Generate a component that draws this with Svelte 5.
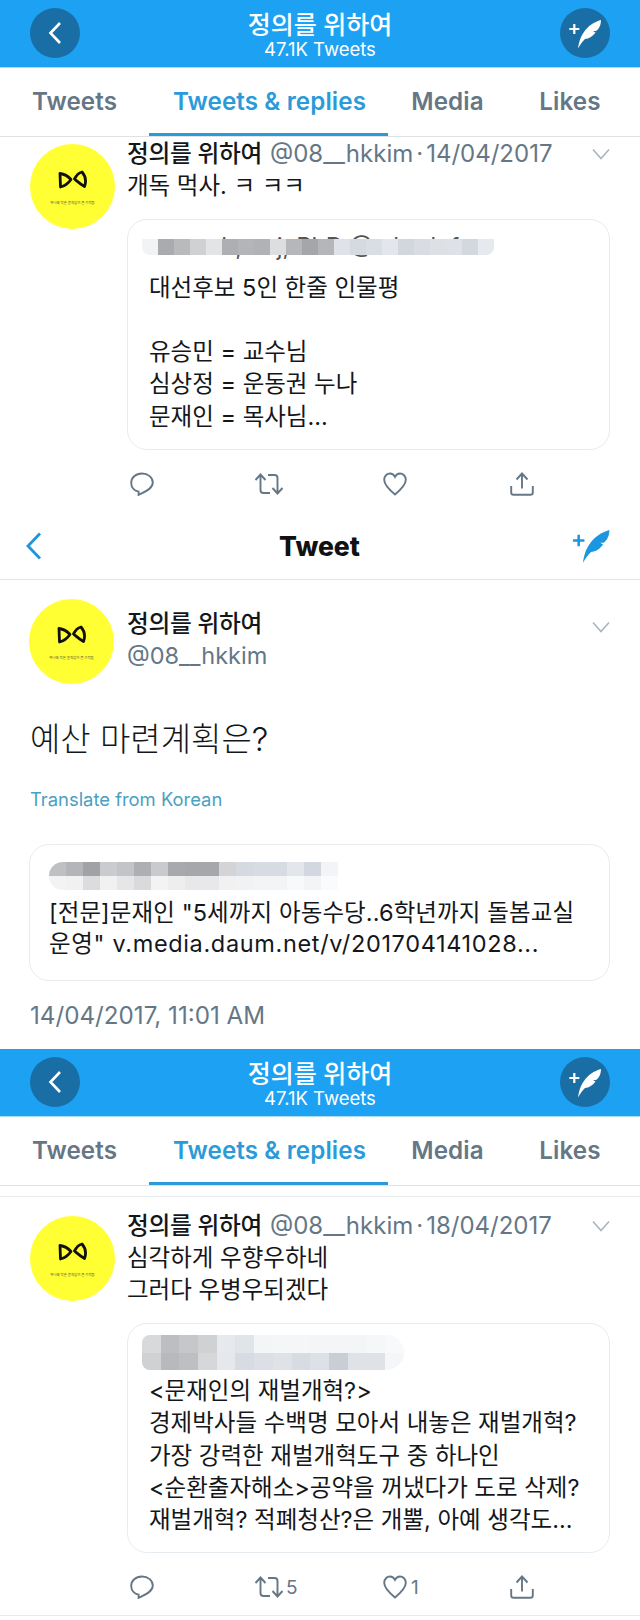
<script lang="ts">
  const tabs = ['Tweets', 'Tweets & replies', 'Media', 'Likes'];

  const g = (s: string) => s.split(' ').map((c) => '#' + c);

  const strip1 = [g('f2f3f4 a9abae b8babc cfd1d3 e3e4e6 adafb2 b3b5b8 b0b2b5 dcdedf b5b7ba a4a6aa b4b6b9 dfe3e8 d5dae1 d9dee4 e3e7eb d2d7de d9dde3 dde1e6 dee2e7 d2d8de e6e9ed')];
  const strip2 = [
    g('bfc0c3 b3b5b8 a0a2a6 c9cbce c2c4c7 adafb3 c8cacd a7a9ad a5a7ab a5a7ab d3d4d6 d5dae1 d7dce3 d7dce3 e3e7ec d2d7e0 f3f4f7'),
    g('f3f3f4 f1f1f2 dcdcde f1f1f2 e6e6e8 dadadc f3f3f4 eeeeef e8e8ea e8e8ea f1f1f2 f1f2f4 f3f4f6 f3f4f6 f8f9fa f3f4f6 fafbfc')
  ];
  const strip3 = [
    g('d8d9da bdbec1 c6c7c9 d0d1d3 e6eaee e0e5ea f3f5f7 f5f6f8 f5f6f8 f3f5f7 f3f5f7 f3f5f7 f6f7f9 f8f9fb'),
    g('d0d1d3 b7b9bc bdbfc2 d6d7d9 e6e8eb d7dce3 dce0e6 dfe3e8 d7dce3 dde1e7 c9ced6 dfe3e8 dfe3e8 f5f6f8')
  ];
</script>

{#snippet mosaic(rows, w, h)}
  <div class="mosaic">
    {#each rows as row}
      <div class="mosaic-row">
        {#each row as c}
          <span style="width:{w}px;height:{h}px;background:{c}"></span>
        {/each}
      </div>
    {/each}
  </div>
{/snippet}

{#snippet avatar()}
  <div class="avatar">
    <svg class="bow" width="32" height="21" viewBox="0 0 32 21">
      <path d="M3 3.5 L3.5 17 C8 16 11.5 13 14 9.5 C11 6 7 4 3 3.5 Z" />
      <path d="M25 2 C21 3 19 6 17.5 9 C20 11 23 14 27.5 16.5 C29.5 11 28.5 6 25 2 Z" />
    </svg>
    <span class="motto">하나의 작은 움직임이 큰 기적을</span>
  </div>
{/snippet}

{#snippet quill(color)}
  <svg width="50" height="50" viewBox="0 0 50 50">
    <path d="M9.3 21h10M14.3 16v10" stroke={color} stroke-width="2.2" fill="none" />
    <path
      d="M18 40.5 C19 33 21 28 24 24 C28 18 34 14 41 12 C41 17 39 21 36 23 L33 23 L35.5 24.5 C33 28 29 31 25 31 C22 34 20 37 18 40.5 Z"
      fill={color}
    />
  </svg>
{/snippet}

{#snippet profileBar()}
  <header class="bar">
    <div class="round">
      <svg width="16" height="28" viewBox="0 0 16 28">
        <path d="M13 4 L3.5 14 L13 24" fill="none" stroke="#fff" stroke-width="2.6" />
      </svg>
    </div>
    <div class="bar-title">
      <div class="bar-name">정의를 위하여</div>
      <div class="bar-count">47.1K Tweets</div>
    </div>
    <div class="round">{@render quill('#fff')}</div>
  </header>
  <nav class="tabs">
    {#each tabs as tab, i}
      <div class="tab" class:active={i === 1}>{tab}</div>
    {/each}
  </nav>
{/snippet}

{#snippet chevron()}
  <svg class="chevron" width="18" height="12" viewBox="0 0 18 12">
    <path d="M1 1.5 L9 10.5 L17 1.5" fill="none" stroke="#a9b5bf" stroke-width="1.6" />
  </svg>
{/snippet}

{#snippet actions(retweets, likes)}
  <div class="actions">
    <div class="action">
      <svg width="24" height="24" viewBox="0 0 24 24" class="ico">
        <path d="M12 1.5 C5.5 1.5 1.2 5.8 1.2 11 C1.2 15.8 4.8 18.8 8.6 19.6 L8.6 23 C13.5 20.5 22.8 17 22.8 10.5 C22.8 5.5 18 1.5 12 1.5 Z" />
      </svg>
    </div>
    <div class="action">
      <svg width="30" height="24" viewBox="0 0 30 24" class="ico">
        <path d="M1.5 8 L6.5 2.5 L11.5 8 M6.5 3 L6.5 18 C6.5 20 7.5 21 9.5 21 L16 21" />
        <path d="M14 3 L20.5 3 C22.5 3 23.5 4 23.5 6 L23.5 21 M18.5 16 L23.5 21.5 L28.5 16" />
      </svg>
      {#if retweets}<span class="num">{retweets}</span>{/if}
    </div>
    <div class="action">
      <svg width="24" height="24" viewBox="0 0 24 24" class="ico">
        <path d="M12 22.5 C6 17.5 1.2 13 1.2 7.8 C1.2 4 4 1.5 7 1.5 C9.2 1.5 11 2.8 12 4.8 C13 2.8 14.8 1.5 17 1.5 C20 1.5 22.8 4 22.8 7.8 C22.8 13 18 17.5 12 22.5 Z" />
      </svg>
      {#if likes}<span class="num like">{likes}</span>{/if}
    </div>
    <div class="action">
      <svg width="24" height="24" viewBox="0 0 24 24" class="ico">
        <path d="M6.5 7.5 L12 1.5 L17.5 7.5 M12 2 L12 16.5 M1.2 14 L1.2 20.5 C1.2 22 2 22.8 3.5 22.8 L20.5 22.8 C22 22.8 22.8 22 22.8 20.5 L22.8 14" />
      </svg>
    </div>
  </div>
{/snippet}

<div class="page">
  {@render profileBar()}

  <section class="tweet first">
    {@render avatar()}
    <div class="main">
      <div class="meta">
        <span class="name">정의를 위하여</span>
        <span class="handle">@08__hkkim</span>
        <span class="dot">·</span>
        <span class="handle">14/04/2017</span>
        {@render chevron()}
      </div>
      <p class="text">개독 먹사. ㅋ ㅋㅋ</p>
      <div class="card card-a">
        <div class="byline">
          <div class="byline-text">ooo oth, anj, PhD @ abcdef</div>
          <div class="cover">{@render mosaic(strip1, 16, 16)}</div>
        </div>
        <p class="quoted">대선후보 5인 한줄 인물평<br /><br />유승민 = 교수님<br />심상정 = 운동권 누나<br />문재인 = 목사님...</p>
      </div>
      {@render actions(null, null)}
    </div>
  </section>

  <nav class="tweet-nav">
    <svg width="22" height="30" viewBox="0 0 22 30">
      <path d="M17 2.5 L5 15 L17 27.5" fill="none" stroke="#1d96e0" stroke-width="2.8" />
    </svg>
    <div class="tweet-nav-title">Tweet</div>
    <div class="nav-quill">{@render quill('#1d96e0')}</div>
  </nav>

  <section class="detail">
    <div class="detail-head">
      {@render avatar()}
      <div class="detail-who">
        <div class="name">정의를 위하여</div>
        <div class="handle big">@08__hkkim</div>
      </div>
      {@render chevron()}
    </div>
    <p class="detail-text">예산 마련계획은?</p>
    <div class="translate">Translate from Korean</div>
    <div class="card card-b">
      {@render mosaic(strip2, 17, 14)}
      <p class="quoted">[전문]문재인 "5세까지 아동수당..6학년까지 돌봄교실<br /><span class="wide">운영" v.media.daum.net/v/201704141028...</span></p>
    </div>
    <div class="stamp">14/04/2017, 11:01 AM</div>
  </section>

  {@render profileBar()}

  <section class="tweet last">
    {@render avatar()}
    <div class="main">
      <div class="meta">
        <span class="name">정의를 위하여</span>
        <span class="handle">@08__hkkim</span>
        <span class="dot">·</span>
        <span class="handle">18/04/2017</span>
        {@render chevron()}
      </div>
      <p class="text">심각하게 우향우하네<br />그러다 우병우되겠다</p>
      <div class="card card-c">
        {@render mosaic(strip3, 18.7, 17.5)}
        <p class="quoted">&lt;문재인의 재벌개혁?&gt;<br />경제박사들 수백명 모아서 내놓은 재벌개혁?<br />가장 강력한 재벌개혁도구 중 하나인<br />&lt;순환출자해소&gt;공약을 꺼냈다가 도로 삭제?<br />재벌개혁? 적폐청산?은 개뿔, 아예 생각도...</p>
      </div>
      {@render actions(5, 1)}
    </div>
  </section>
</div>

<style>
  :global(body) {
    margin: 0;
    background: #fff;
  }

  .page {
    width: 640px;
    height: 1620px;
    overflow: hidden;
    font-family: Inter, "Noto Sans CJK KR", sans-serif;
    color: #14171a;
  }

  p {
    margin: 0;
  }

  .bar {
    background: #1da1f2;
    border-bottom: 1px solid #a9dcf9;
    display: flex;
    align-items: flex-start;
    justify-content: space-between;
    padding: 8px 30px 0;
    box-sizing: border-box;
    height: 68px;
    color: #fff;
  }

  .round {
    width: 50px;
    height: 50px;
    border-radius: 50%;
    background: #1a6ea6;
    display: flex;
    align-items: center;
    justify-content: center;
  }

  .bar-title {
    text-align: center;
    margin-top: 1px;
  }

  .bar-name {
    font-size: 25px;
    font-weight: 500;
    line-height: 32px;
  }

  .bar-count {
    font-size: 18.5px;
    line-height: 18px;
    margin-top: -1px;
  }

  .tabs {
    height: 69px;
    box-sizing: border-box;
    border-bottom: 1px solid #dde2e6;
    display: grid;
    grid-template-columns: 149px 239px 119px 126px;
  }

  .tab {
    font-size: 24.2px;
    font-weight: 600;
    color: #657786;
    text-align: center;
    line-height: 68px;
    height: 68px;
    box-sizing: border-box;
    letter-spacing: 0.1px;
  }

  .tab.active {
    color: #2a9bd8;
    border-bottom: 3px solid #2a9bd8;
    padding-left: 2px;
    white-space: nowrap;
  }

  .tweet {
    display: flex;
    gap: 12px;
    padding: 0 30px;
  }

  .tweet.first {
    height: 375px;
    padding-top: 1px;
    box-sizing: border-box;
  }

  .tweet.last {
    margin-top: 10px;
    border-top: 1px solid #e6ecf0;
    border-bottom: 1px solid #e6ecf0;
    padding-top: 13px;
    height: 420px;
    box-sizing: border-box;
  }

  .tweet > .avatar {
    margin-top: 6px;
  }

  .avatar {
    width: 85px;
    height: 85px;
    flex: none;
    border-radius: 50%;
    background: #ffff33;
    display: flex;
    flex-direction: column;
    align-items: center;
    padding-top: 26px;
    box-sizing: border-box;
  }

  .bow path {
    fill: none;
    stroke: #111;
    stroke-width: 2.8;
    stroke-linejoin: round;
  }

  .motto {
    font-size: 3.4px;
    line-height: 6px;
    margin-top: 9px;
    white-space: nowrap;
    color: #444;
  }

  .main {
    flex: 1;
    min-width: 0;
  }

  .meta {
    display: flex;
    align-items: center;
    height: 32px;
  }

  .name {
    font-size: 23.7px;
    font-weight: 500;
    line-height: 32px;
    margin-right: 8px;
    letter-spacing: -0.3px;
  }

  .handle {
    font-size: 24px;
    color: #657786;
    line-height: 32px;
  }

  .dot {
    font-size: 24px;
    color: #657786;
    margin: 0 3px;
    line-height: 32px;
  }

  .chevron {
    margin-left: auto;
    flex: none;
  }

  .text {
    font-size: 23.5px;
    line-height: 31.5px;
  }

  .card {
    border: 1px solid #e6ecf0;
    border-radius: 20px;
    box-sizing: border-box;
  }

  .card-a {
    margin-top: 17px;
    height: 231px;
    padding: 19px 14px 0 14px;
  }

  .card-b {
    margin-top: 33px;
    height: 137px;
    padding: 17px 19px 0;
  }

  .card-c {
    margin-top: 18px;
    height: 230px;
    padding: 11px 14px 0;
  }

  .mosaic {
    display: flex;
    flex-direction: column;
    width: max-content;
    overflow: hidden;
  }

  .cover .mosaic {
    border-radius: 0 0 8px 8px;
  }

  .card-b .mosaic {
    border-radius: 14px 0 0 14px;
  }

  .card-c .mosaic {
    border-radius: 8px 18px 18px 8px;
  }

  .mosaic-row {
    display: flex;
  }

  .mosaic-row span {
    display: block;
  }

  /* the strip sits over the top of the quoted author line */
  .byline {
    position: relative;
    height: 22px;
  }

  .byline-text {
    font-size: 24px;
    line-height: 28px;
    margin-top: -6px;
    padding: 0 0 0 7px;
    color: #555;
    white-space: nowrap;
    position: absolute;
    top: 0;
    left: 0;
  }

  .cover {
    position: absolute;
    top: 0;
    left: 0;
    background: #fff;
  }

  .quoted {
    font-size: 23.5px;
    line-height: 32.3px;
    white-space: nowrap;
  }

  .card-a .quoted {
    margin-top: 11px;
    padding-left: 7px;
  }

  .card-b .quoted {
    margin-top: 7px;
    line-height: 31px;
    letter-spacing: 0.1px;
  }

  .wide {
    letter-spacing: 0.65px;
  }

  .card-c .quoted {
    margin-top: 5px;
    padding-left: 7px;
  }

  .actions {
    display: grid;
    grid-template-columns: 124px 129px 127px 24px;
    margin: 22px 0 0 3px;
    height: 24px;
  }

  .action {
    display: flex;
    align-items: center;
    gap: 2px;
  }

  .ico path {
    fill: none;
    stroke: #657786;
    stroke-width: 1.9;
  }

  .num {
    font-size: 19px;
    color: #657786;
  }

  .num.like {
    margin-left: 2px;
  }

  .tweet-nav {
    height: 68px;
    box-sizing: border-box;
    border-bottom: 1px solid #e1e5e8;
    display: flex;
    align-items: center;
    justify-content: space-between;
    padding: 0 28px 0 23px;
  }

  .tweet-nav-title {
    font-size: 26.5px;
    font-weight: 800;
    color: #111;
    margin-left: 28px;
  }

  .nav-quill {
    height: 50px;
    margin-top: -2px;
    margin-right: -4px;
    transform: scale(1.15);
  }

  .detail {
    height: 469px;
    box-sizing: border-box;
    padding: 19px 30px 0 29px;
  }

  .detail-head {
    display: flex;
    gap: 13px;
  }

  .detail-head .chevron {
    margin-top: 22px;
  }

  .detail-who {
    margin-top: 9px;
  }

  .handle.big {
    font-size: 23.5px;
  }

  .detail-text {
    font-size: 33px;
    font-weight: 300;
    line-height: 46px;
    margin: 32px 0 0 1px;
  }

  .translate {
    margin: 25px 0 0 1px;
    font-size: 18.4px;
    line-height: 24px;
    color: #4a9fc4;
  }

  .stamp {
    font-size: 24.2px;
    line-height: 30px;
    color: #657786;
    margin: 20px 0 0 1px;
  }
</style>
